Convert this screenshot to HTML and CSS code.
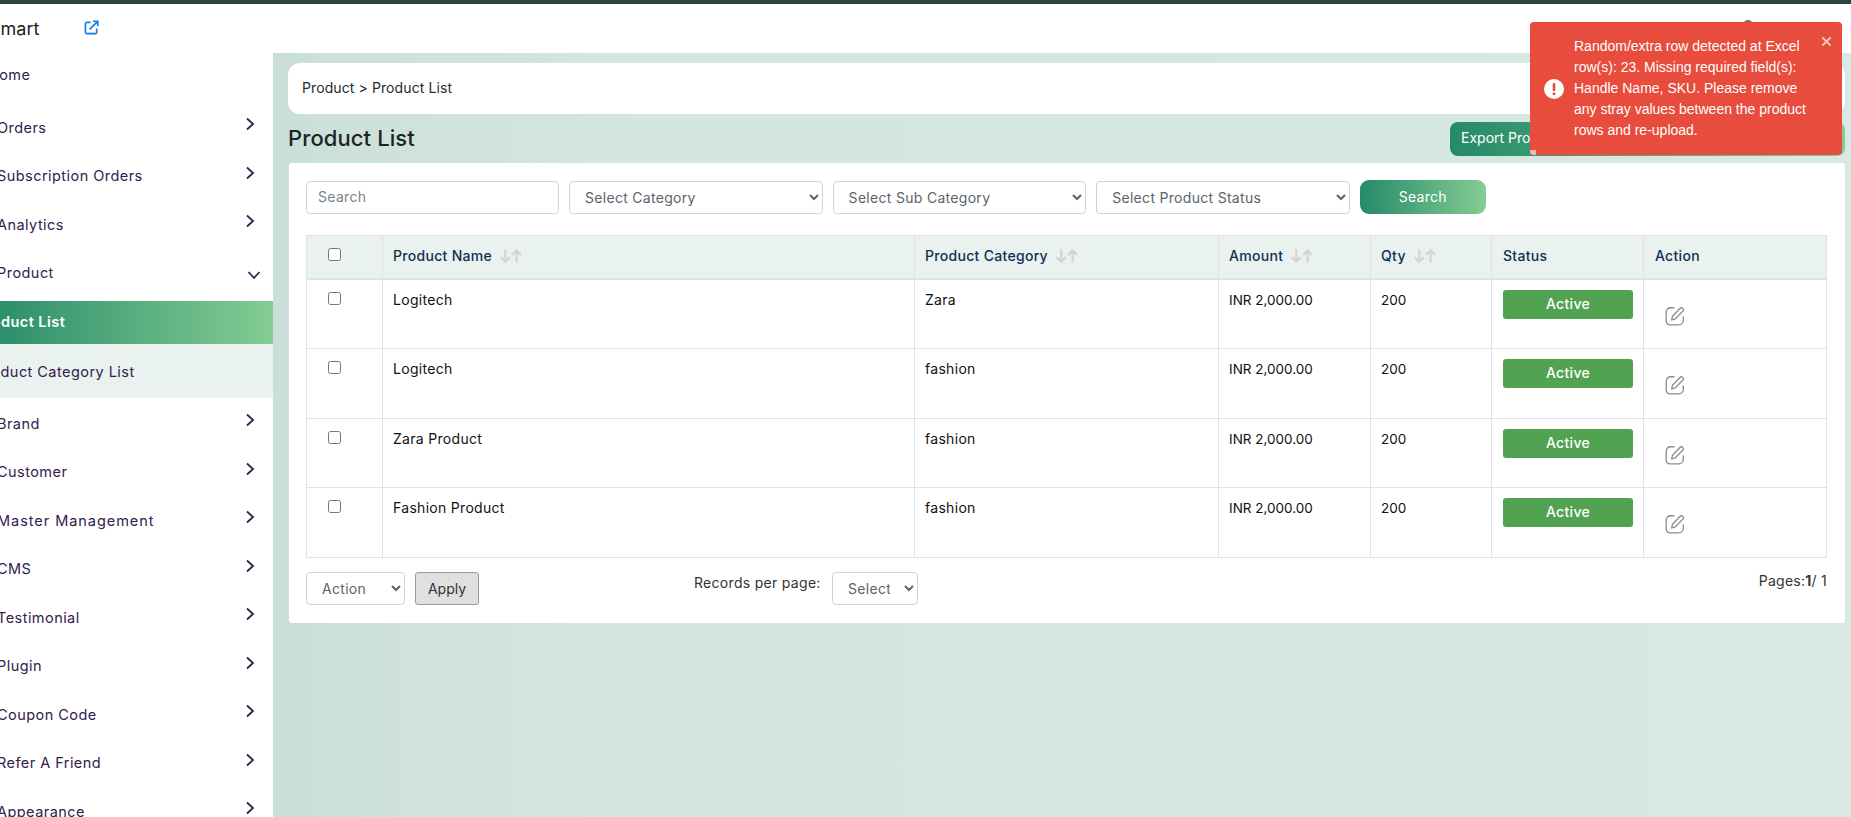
FILE: index.html
```html
<!DOCTYPE html>
<html lang="en">
<head>
<meta charset="utf-8">
<title>Product List</title>
<link rel="stylesheet" href="styles.css">
</head>
<body>
<div class="topbar"></div>
<header class="header">
  <span class="brand">Smart</span>
  <svg class="ext" viewBox="0 0 16 16" width="15" height="15"><path d="M13.5 9v4a1.5 1.5 0 0 1-1.5 1.5H3A1.5 1.5 0 0 1 1.5 13V4A1.5 1.5 0 0 1 3 2.500h4" fill="none" stroke="#0d7bf2" stroke-width="1.800"/><path d="M6 10 14 2M9.500 1.300h5.200v5.200" fill="none" stroke="#0d7bf2" stroke-width="1.800"/></svg>
  <span class="avatar"></span>
</header>
<div class="shell">
  <aside class="sidebar">
    <a class="nav home"><span>Home</span></a>
    <a class="nav"><span>Orders</span><svg class="chev" viewBox="0 0 10 14"><path d="M2 1.500 8 7l-6 5.500" /></svg></a>
    <a class="nav"><span>Subscription Orders</span><svg class="chev" viewBox="0 0 10 14"><path d="M2 1.500 8 7l-6 5.500" /></svg></a>
    <a class="nav"><span>Analytics</span><svg class="chev" viewBox="0 0 10 14"><path d="M2 1.500 8 7l-6 5.500" /></svg></a>
    <a class="nav open"><span>Product</span><svg class="chev down" viewBox="0 0 14 10"><path d="M1.500 2 7 8l5.500-6" /></svg></a>
    <a class="sub active"><span>Product List</span></a>
    <a class="sub last"><span>Product Category List</span></a>
    <a class="nav"><span>Brand</span><svg class="chev" viewBox="0 0 10 14"><path d="M2 1.500 8 7l-6 5.500" /></svg></a>
    <a class="nav"><span>Customer</span><svg class="chev" viewBox="0 0 10 14"><path d="M2 1.500 8 7l-6 5.500" /></svg></a>
    <a class="nav master"><span>Master Management</span><svg class="chev" viewBox="0 0 10 14"><path d="M2 1.500 8 7l-6 5.500" /></svg></a>
    <a class="nav"><span>CMS</span><svg class="chev" viewBox="0 0 10 14"><path d="M2 1.500 8 7l-6 5.500" /></svg></a>
    <a class="nav"><span>Testimonial</span><svg class="chev" viewBox="0 0 10 14"><path d="M2 1.500 8 7l-6 5.500" /></svg></a>
    <a class="nav"><span>Plugin</span><svg class="chev" viewBox="0 0 10 14"><path d="M2 1.500 8 7l-6 5.500" /></svg></a>
    <a class="nav"><span>Coupon Code</span><svg class="chev" viewBox="0 0 10 14"><path d="M2 1.500 8 7l-6 5.500" /></svg></a>
    <a class="nav"><span>Refer A Friend</span><svg class="chev" viewBox="0 0 10 14"><path d="M2 1.500 8 7l-6 5.500" /></svg></a>
    <a class="nav"><span>Appearance</span><svg class="chev" viewBox="0 0 10 14"><path d="M2 1.500 8 7l-6 5.500" /></svg></a>
  </aside>
  <main class="main">
    <div class="crumb">Product &gt; Product List</div>
    <div class="titlerow">
      <h1>Product List</h1>
      <button class="export">Export Products</button>
    </div>
    <section class="card">
      <div class="filters">
        <input class="field search" placeholder="Search">
        <select class="field pick"><option>Select Category</option></select>
        <select class="field pick"><option>Select Sub Category</option></select>
        <select class="field pick"><option>Select Product Status</option></select>
        <button class="go">Search</button>
      </div>
      <table class="grid">
        <colgroup><col class="c1"><col class="c2"><col class="c3"><col class="c4"><col class="c5"><col class="c6"><col class="c7"></colgroup>
        <thead>
          <tr>
            <th class="chk"><input type="checkbox"></th>
            <th>Product Name <svg class="sort" viewBox="0 0 22 14"><path d="M5.500 1v11M1.500 8l4 4 4-4M15.500 13V2M11.500 6l4-4 4 4"/></svg></th>
            <th>Product Category <svg class="sort" viewBox="0 0 22 14"><path d="M5.500 1v11M1.500 8l4 4 4-4M15.500 13V2M11.500 6l4-4 4 4"/></svg></th>
            <th>Amount <svg class="sort" viewBox="0 0 22 14"><path d="M5.500 1v11M1.500 8l4 4 4-4M15.500 13V2M11.500 6l4-4 4 4"/></svg></th>
            <th>Qty <svg class="sort" viewBox="0 0 22 14"><path d="M5.500 1v11M1.500 8l4 4 4-4M15.500 13V2M11.500 6l4-4 4 4"/></svg></th>
            <th>Status</th>
            <th>Action</th>
          </tr>
        </thead>
        <tbody>
          <tr><td class="chk"><input type="checkbox"></td><td>Logitech</td><td>Zara</td><td class="amt">INR 2,000.00</td><td class="amt">200</td><td><span class="pill">Active</span></td><td><svg class="edit" viewBox="0 0 20 20"><path d="M9.500 2.500H6A4 4 0 0 0 2 6.500v8A3.500 3.500 0 0 0 5.500 18h8a4 4 0 0 0 4-4v-3.500"/><path d="M7 13.500l.7-3.300 7-7.200a1.500 1.500 0 0 1 2.200 0l.3.300a1.500 1.500 0 0 1 0 2.200l-7 7.200z"/></svg></td></tr>
          <tr><td class="chk"><input type="checkbox"></td><td>Logitech</td><td>fashion</td><td class="amt">INR 2,000.00</td><td class="amt">200</td><td><span class="pill">Active</span></td><td><svg class="edit" viewBox="0 0 20 20"><path d="M9.500 2.500H6A4 4 0 0 0 2 6.500v8A3.500 3.500 0 0 0 5.500 18h8a4 4 0 0 0 4-4v-3.500"/><path d="M7 13.500l.7-3.300 7-7.200a1.500 1.500 0 0 1 2.200 0l.3.300a1.500 1.500 0 0 1 0 2.200l-7 7.200z"/></svg></td></tr>
          <tr><td class="chk"><input type="checkbox"></td><td>Zara Product</td><td>fashion</td><td class="amt">INR 2,000.00</td><td class="amt">200</td><td><span class="pill">Active</span></td><td><svg class="edit" viewBox="0 0 20 20"><path d="M9.500 2.500H6A4 4 0 0 0 2 6.500v8A3.500 3.500 0 0 0 5.500 18h8a4 4 0 0 0 4-4v-3.500"/><path d="M7 13.500l.7-3.300 7-7.200a1.500 1.500 0 0 1 2.200 0l.3.300a1.500 1.500 0 0 1 0 2.200l-7 7.200z"/></svg></td></tr>
          <tr><td class="chk"><input type="checkbox"></td><td>Fashion Product</td><td>fashion</td><td class="amt">INR 2,000.00</td><td class="amt">200</td><td><span class="pill">Active</span></td><td><svg class="edit" viewBox="0 0 20 20"><path d="M9.500 2.500H6A4 4 0 0 0 2 6.500v8A3.500 3.500 0 0 0 5.500 18h8a4 4 0 0 0 4-4v-3.500"/><path d="M7 13.500l.7-3.300 7-7.200a1.500 1.500 0 0 1 2.200 0l.3.300a1.500 1.500 0 0 1 0 2.200l-7 7.200z"/></svg></td></tr>
        </tbody>
      </table>
      <div class="foot">
        <select class="field act"><option>Action</option></select>
        <button class="apply">Apply</button>
        <span class="rec">Records per page:</span>
        <select class="field per"><option>Select</option></select>
        <span class="pages">Pages:<b>1</b>/ 1</span>
      </div>
    </section>
  </main>
</div>
<div class="toast">
  <svg class="alert" viewBox="0 0 20 20"><circle cx="10" cy="10" r="10" fill="#fff"/><rect x="8.700" y="4" width="2.600" height="8" rx="1" fill="#e74c3c"/><circle cx="10" cy="14.700" r="1.500" fill="#e74c3c"/></svg>
  <p>Random/extra row detected at Excel row(s): 23. Missing required field(s): Handle Name, SKU. Please remove any stray values between the product rows and re-upload.</p>
  <svg class="close" viewBox="0 0 12 12"><path d="M1.500 1.500l9 9M10.500 1.500l-9 9"/></svg>
  <span class="prog"></span>
</div>
</body>
</html>
```
FILE: styles.css
```css
* { box-sizing: border-box; }
html, body { margin: 0; height: 100%; }
body { width: 1851px; height: 817px; overflow: hidden; background: #fff; font-family: Inter, "Liberation Sans", sans-serif; color: #1e1e1e; position: relative; }
.topbar { height: 4px; background: #2c4540; }
.header { height: 49px; display: flex; align-items: center; background: #fff; position: relative; }
.brand { font-size: 18px; margin-left: -11px; width: 95px; color: #1c1c24; }
.ext { margin-top: -3px; }
.avatar { position: absolute; left: 1743px; top: 16px; width: 10px; height: 10px; border-radius: 50%; background: #6a7278; }
.shell { display: flex; height: 764px; }
.sidebar { width: 273px; flex: none; overflow: hidden; background: #fff; }
.nav { height: 48.500px; display: flex; align-items: center; justify-content: space-between; padding-right: 18px; font-size: 14.500px; letter-spacing: .45px; color: #33204d; margin-left: -3px; }
.nav.master span { letter-spacing: .95px; }
.nav.home { margin-left: -12px; margin-bottom: 7px; height: 43px; }
.nav.open { margin-bottom: 4px; }
.chev { width: 10px; height: 14px; margin-top: -6px; fill: none; stroke: #33204d; stroke-width: 1.800; }
.chev.down { width: 14px; height: 10px; margin: 4px -6px 0 0; }
.sub { display: flex; align-items: center; height: 54px; font-size: 14.500px; letter-spacing: .45px; margin-left: -24px; background: #e9f2ee; color: #33204d; }
.sub.active { height: 43px; padding-bottom: 2px; background: linear-gradient(90deg, #258a68, #84cc93); color: #fff; font-weight: 600; }
.sub.last { margin-bottom: 1px; }
.main { flex: 1; padding: 10px 6px 0 15px; background: linear-gradient(90deg, #cbdfd9 0, #d3e5df 20%, #d8e9e3 100%); }
.crumb { height: 51px; background: #fff; border-radius: 12px; display: flex; align-items: center; padding: 0 0 2px 14px; font-size: 14px; color: #2a2a2a; letter-spacing: .1px; }
.titlerow { height: 49px; display: flex; align-items: center; justify-content: space-between; }
.titlerow h1 { margin: -2px 0 0; font-size: 22px; font-weight: 500; letter-spacing: .1px; color: #1e2326; }
.export { width: 395px; height: 34px; margin-top: 1px; border: 0; border-radius: 8px; background: linear-gradient(90deg, #258a68, #84cc93); color: #fff; font: 14px Inter, sans-serif; text-align: left; padding: 0 0 3px 11px; }
.card { margin-left: 1px; height: 460px; background: #fff; border-radius: 3px; padding: 18px 18px 0 17px; }
.filters { display: flex; gap: 10px; height: 54px; align-items: flex-start; }
.field { height: 33px; background: #fff; border: 1px solid #ced4da; border-radius: 4px; font: 14px Inter, sans-serif; letter-spacing: .3px; color: #5c636a; padding: 0 11px; }
.search { width: 253px; padding-bottom: 2px; }
.search::placeholder { color: #7b838b; }
.pick { width: 253.600px; }
.go { width: 126px; height: 34px; margin-top: -1px; border: 0; border-radius: 9px; background: linear-gradient(90deg, #258a68, #84cc93); color: #fff; font: 14px Inter, sans-serif; letter-spacing: .3px; padding: 0 0 2px 0; }
.grid { width: 1521px; border-collapse: collapse; table-layout: fixed; font-size: 14px; letter-spacing: .3px; }
.c1 { width: 76px; } .c2 { width: 532px; } .c3 { width: 304px; } .c4 { width: 152px; } .c5 { width: 121px; } .c6 { width: 152px; }
.grid th, .grid td { border: 1px solid #dee2e6; padding: 0 10px; text-align: left; vertical-align: top; }
.grid th { height: 43px; background: #e9f2ee; color: #0e3053; font-weight: 500; line-height: 40px; border-bottom: 2px solid #dee2e6; }
.grid td { height: 69.750px; padding-top: 10px; line-height: 20px; color: #111; }
.grid .amt { font-size: 13.500px; letter-spacing: 0; }
.grid .chk { text-align: center; padding: 0; }
.grid th.chk { line-height: 1; padding-top: 12px; }
.grid td.chk { padding-top: 12px; line-height: 1; }
.chk input { width: 13px; height: 13px; margin: 0 21px 0 0; }
.sort { width: 25px; height: 16px; margin-left: 3px; vertical-align: -3px; fill: none; stroke: #d3d6d6; stroke-width: 2; }
.grid th:nth-child(6), .grid th:nth-child(7), .grid td:nth-child(6), .grid td:nth-child(7) { padding-left: 11px; }
.pill { display: block; height: 29px; width: 130px; border-radius: 3px; background: #51a351; color: #fff; text-align: center; line-height: 28px; font-weight: 500; }
.edit { display: block; width: 22px; height: 22px; margin: 15px 0 0 9px; fill: none; stroke: #8a8a8a; stroke-width: 1.200; }
.foot { display: flex; align-items: flex-start; margin-top: 14px; font-size: 14px; }
.act { width: 99px; }
.apply { width: 64px; height: 33px; margin-left: 10px; border: 1px solid #9a9a9a; border-radius: 3px; background: #e0e0e0; color: #333; font: 14px Inter, sans-serif; }
.rec { width: 138px; margin-left: 215px; margin-top: 2px; color: #333; letter-spacing: .3px; }
.per { width: 86px; }
.pages { margin-left: auto; color: #333; letter-spacing: .25px; }
.toast { position: absolute; left: 1530px; top: 22px; width: 312px; height: 133px; background: #e74c3c; border-radius: 4px; color: #fff; font: 14px/21px "Liberation Sans", Arial, sans-serif; display: flex; align-items: center; padding: 0 30px 0 14px; overflow: hidden; }
.toast p { margin: 0 0 0 10px; }
.alert { width: 20px; height: 20px; flex: none; }
.close { position: absolute; right: 10px; top: 14px; width: 11px; height: 11px; fill: none; stroke: #f7c9c4; stroke-width: 2.200; }
.prog { position: absolute; left: 0; bottom: 0; width: 6px; height: 5px; background: #f5b7b1; }
```
